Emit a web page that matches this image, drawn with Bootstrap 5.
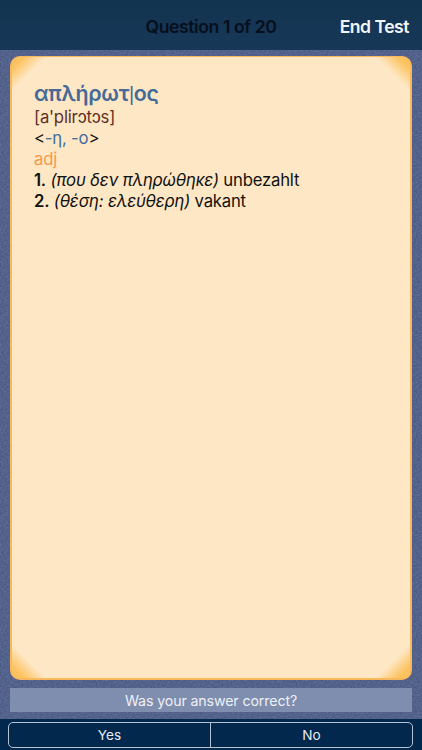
<!DOCTYPE html>
<html lang="el">
<head>
<meta charset="utf-8">
<title>Test</title>
<link href="https://cdn.jsdelivr.net/npm/bootstrap@5.3.0/dist/css/bootstrap.min.css" rel="stylesheet">
<style>
html,body{height:100%}
body{font-family:Inter,"Noto Sans",sans-serif;background-color:#4a5a84;
 background-image:url("data:image/svg+xml,%3Csvg xmlns='http://www.w3.org/2000/svg' width='200' height='200'%3E%3Cfilter id='n'%3E%3CfeTurbulence type='fractalNoise' baseFrequency='.55' numOctaves='2' stitchTiles='stitch'/%3E%3CfeColorMatrix values='0 0 0 0 .16 0 0 0 0 .2 0 0 0 0 .36 1.1 0 0 0 -.3'/%3E%3C/filter%3E%3Crect width='200' height='200' filter='url(%23n)'/%3E%3C/svg%3E");}
.app-shell{height:750px;width:422px;overflow:hidden}
.top-bar{height:50px;background:linear-gradient(#12334f,#183858);padding:0 13px 0 0;flex:none}
.top-title{left:0;right:0;top:0;height:50px;line-height:53px;text-align:center;font-size:17.6px;font-weight:600;color:#060f1b;letter-spacing:-.42px}
.end-link{font-size:17.6px;font-weight:600;color:#f2f5f8;line-height:53px;letter-spacing:-.5px;text-decoration:none}
.stage{padding:6px 10px 8px 10px;min-height:0}
.flash-card{border:2px solid #f8b95c;border-width:1px 2px 2px 2px;border-radius:10px;padding:23px 22px;
 background-color:#fee7c4;
 background-image:
  linear-gradient(135deg,#fcc25f 0,#fcc25f 8px,rgba(254,231,195,0) 24px),
  linear-gradient(225deg,#fcc25f 0,#fcc25f 8px,rgba(254,231,195,0) 24px),
  linear-gradient(45deg,#fcc25f 0,#fcc25f 8px,rgba(254,231,195,0) 24px),
  linear-gradient(315deg,#fcc25f 0,#fcc25f 8px,rgba(254,231,195,0) 24px);
 background-size:40px 40px;
 background-position:left top,right top,left bottom,right bottom;
 background-repeat:no-repeat;
 color:#111;font-size:16.7px;line-height:21px;letter-spacing:-.2px}
.flash-line{height:21px;white-space:nowrap}
.head-word{font-size:21.4px;height:27px;line-height:27px;font-weight:600;color:#456a97;letter-spacing:-.3px}
.head-sep{font-family:"Liberation Sans",sans-serif;font-weight:400;font-size:20px}
.phon{color:#5f3026}
.gram-blue{color:#3f6d9e}
.pos{color:#f39a4c}
.prompt-strip{height:24px;margin:0 10px 7px;background:#7f8dae;color:#edf0f6;font-size:14.2px;line-height:25px;text-align:center;flex:none;letter-spacing:-.12px}
.bottom-bar{height:31px;background:#02284e;padding:3px 8px 2px 8px;flex:none}
.answer-group{height:26px;width:405px;border:1px solid #b5c2d2;border-radius:5px;overflow:hidden}
.answer-btn{width:201px;background:transparent;border:0;padding:0;color:#e9edf3;font-size:13.6px;line-height:25px}
.answer-btn + .answer-btn{flex:1 1 0;border-left:1px solid #b5c2d2}
</style>
</head>
<body>
<div class="app-shell d-flex flex-column">
  <div class="top-bar d-flex justify-content-end position-relative">
    <div class="top-title position-absolute">Question 1 of 20</div>
    <a class="end-link position-relative" href="#">End Test</a>
  </div>
  <div class="stage flex-grow-1 d-flex flex-column">
    <div class="flash-card flex-grow-1">
      <div class="head-word">απλήρωτ<span class="head-sep">|</span>ος</div>
      <div class="flash-line phon">[a'plirɔtɔs]</div>
      <div class="flash-line">&lt;<span class="gram-blue">-η, -ο</span>&gt;</div>
      <div class="flash-line pos">adj</div>
      <div class="flash-line"><b class="fw-semibold">1.</b> <i>(που δεν πληρώθηκε)</i> unbezahlt</div>
      <div class="flash-line"><b class="fw-semibold">2.</b> <i>(θέση: ελεύθερη)</i> vakant</div>
    </div>
  </div>
  <div class="prompt-strip">Was your answer correct?</div>
  <div class="bottom-bar">
    <div class="answer-group d-flex">
      <button type="button" class="answer-btn">Yes</button>
      <button type="button" class="answer-btn">No</button>
    </div>
  </div>
</div>
<script src="https://cdn.jsdelivr.net/npm/bootstrap@5.3.0/dist/js/bootstrap.bundle.min.js"></script>
</body>
</html>
